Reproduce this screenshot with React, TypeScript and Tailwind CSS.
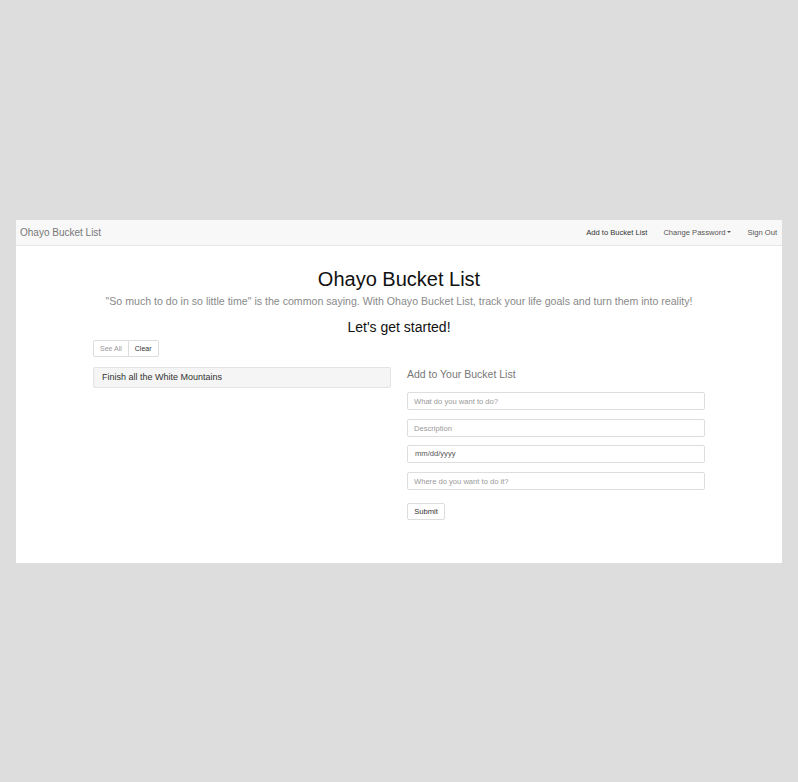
import React from 'react';

export default function App() {
  const font = { fontFamily: '"Liberation Sans", Arial, sans-serif' };

  return (
    <div className="min-h-[782px] bg-[#dddddd] pt-[220px] px-[16px]" style={font}>
      <div className="bg-white h-[343px] flex flex-col">
        {/* navbar */}
        <div className="h-[26px] bg-[#f8f8f8] border-b border-[#e7e7e7] flex items-center justify-between pl-[4px] pr-[5px]">
          <span className="text-[10px] text-[#777]">Ohayo Bucket List</span>
          <div className="flex items-center text-[7.6px] text-[#555]">
            <span className="mr-[16px] text-[#333]">Add to Bucket List</span>
            <span className="mr-[16px] flex items-center">
              Change Password
              <span className="ml-[2px] inline-block w-0 h-0 border-l-[2px] border-r-[2px] border-t-[2px] border-l-transparent border-r-transparent border-t-[#555]"></span>
            </span>
            <span>Sign Out</span>
          </div>
        </div>

        {/* header */}
        <h1 className="mt-[21px] text-center text-[20px] leading-[24px] text-[#111]">Ohayo Bucket List</h1>
        <p className="mt-[2px] text-center text-[10.6px] leading-[16px] text-[#8a8a8a]">
          "So much to do in so little time" is the common saying. With Ohayo Bucket List, track your life goals and turn them into reality!
        </p>
        <h2 className="mt-[10px] text-center text-[14px] leading-[16px] font-medium text-[#111]">Let's get started!</h2>

        <div className="w-[612px] mx-auto">
          {/* button group */}
          <div className="mt-[5px] flex">
            <button className="h-[17px] px-[6px] text-[7px] leading-none text-[#999] bg-white border border-[#ddd] rounded-l-[2px]">See All</button>
            <button className="h-[17px] px-[6px] -ml-px text-[7px] leading-none text-[#333] bg-white border border-[#ddd] rounded-r-[2px]">Clear</button>
          </div>

          <div className="mt-[10px] grid grid-cols-2 gap-[16px]">
            {/* list */}
            <div>
              <div className="h-[21px] bg-[#f5f5f5] border border-[#e3e3e3] rounded-[2px] flex items-center px-[8px] text-[9px] text-[#333]">
                Finish all the White Mountains
              </div>
            </div>

            {/* form */}
            <div className="flex flex-col items-start">
              <h3 className="text-[10.5px] leading-[14px] text-[#777]">Add to Your Bucket List</h3>
              <input className="w-full mt-[11px] h-[18px] border border-[#ddd] rounded-[2px] px-[6px] text-[7.6px] placeholder:text-[#999] outline-none" placeholder="What do you want to do?" />
              <input className="w-full mt-[9px] h-[18px] border border-[#ddd] rounded-[2px] px-[6px] text-[7.6px] placeholder:text-[#999] outline-none" placeholder="Description" />
              <div className="w-full mt-[8px] h-[18px] border border-[#ddd] rounded-[2px] px-[7px] text-[7.6px] text-[#555] flex items-center">mm/dd/yyyy</div>
              <input className="w-full mt-[9px] h-[18px] border border-[#ddd] rounded-[2px] px-[6px] text-[7.6px] placeholder:text-[#999] outline-none" placeholder="Where do you want to do it?" />
              <button className="mt-[13px] h-[17px] w-[38px] text-[7.6px] leading-none text-[#333] bg-white border border-[#ddd] rounded-[2px]">Submit</button>
            </div>
          </div>
        </div>
      </div>
    </div>
  );
}
